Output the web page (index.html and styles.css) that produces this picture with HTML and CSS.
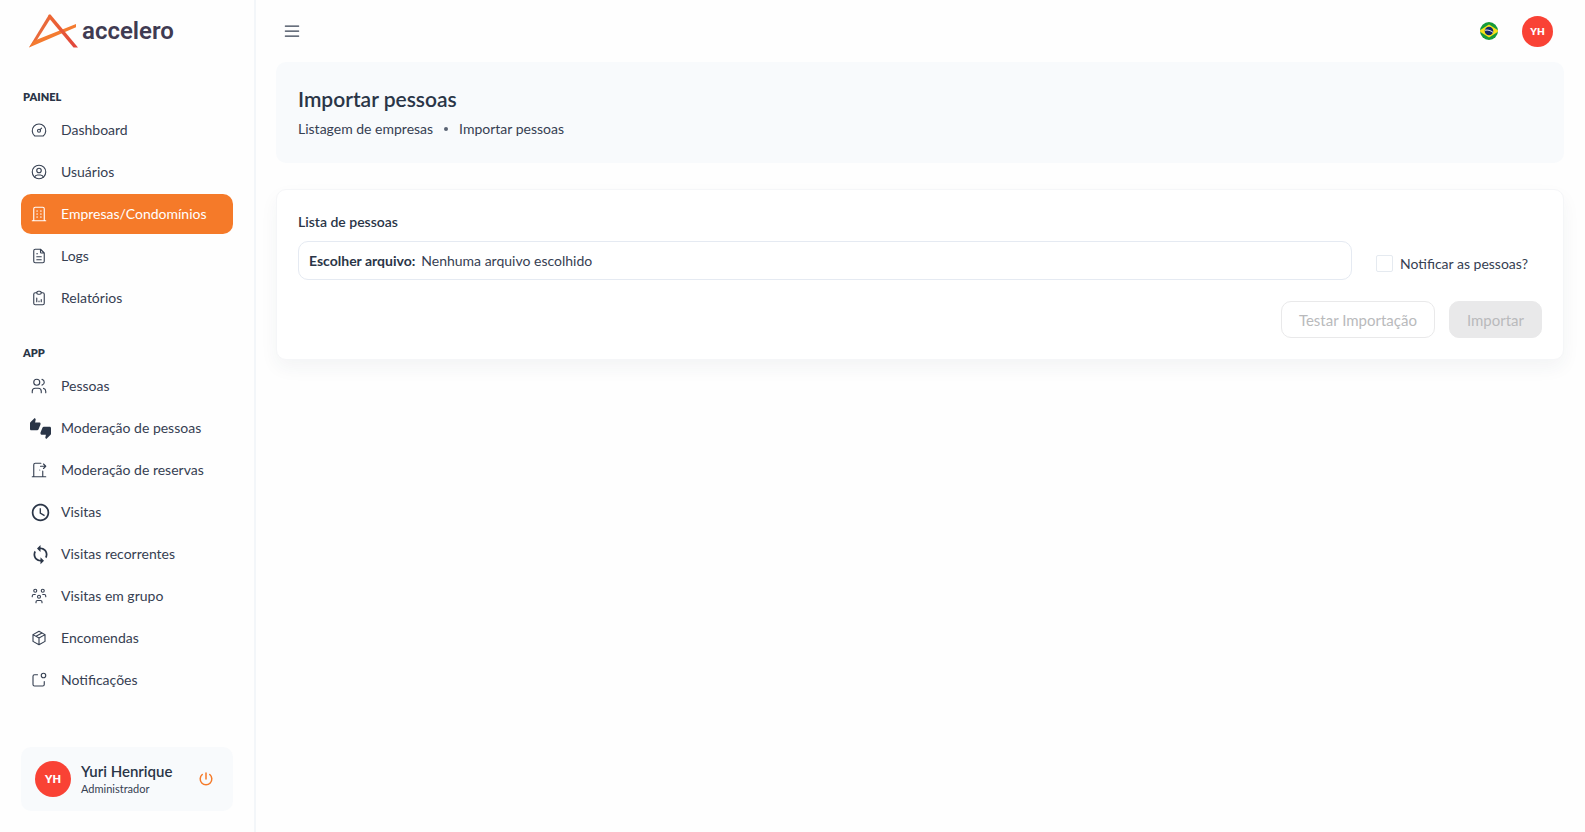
FILE: index.html
```html
<!DOCTYPE html>
<html lang="pt-BR">
<head>
    <meta charset="UTF-8">
    <meta name="viewport" content="width=device-width, initial-scale=1.0">
    <title>Importar pessoas</title>
    <link rel="stylesheet" href="styles.css">
</head>
<body>

    <div class="layout">
        <aside class="sidebar">
            <a class="logo" href="#">
                <svg class="logo-mark" viewBox="0 0 50 36">
                    <defs>
                        <linearGradient id="leg" x1="0" y1="0" x2="1" y2="1">
                            <stop offset="0" stop-color="#ee6a33"/>
                            <stop offset="1" stop-color="#e0433c"/>
                        </linearGradient>
                    </defs>
                    <path fill="#e9693a" d="M20 1.500L22.500 4 6 30 0 34.500z"/>
                    <path fill="#f47b30" d="M0 34.500L4.500 28 47 11v3.200z"/>
                    <path fill="url(#leg)" d="M20 1.500h1.500L49 34.500h-4.500L19 4z"/>
                </svg>
                <span class="logo-text">accelero</span>
            </a>

            <nav class="menu">
                <h2 class="menu-title">PAINEL</h2>
                <a class="menu-item" href="#">
                    <svg class="icon" viewBox="0 0 24 24"><circle cx="12" cy="13" r="2"/><path d="M13.450 11.550L15.500 9.500M6.400 20a9 9 0 1 1 11.200 0z"/></svg>
                    <span>Dashboard</span>
                </a>
                <a class="menu-item" href="#">
                    <svg class="icon" viewBox="0 0 24 24"><circle cx="12" cy="12" r="9"/><circle cx="12" cy="10" r="3"/><path d="M6.168 18.849A4 4 0 0 1 10 16h4a4 4 0 0 1 3.834 2.855"/></svg>
                    <span>Usuários</span>
                </a>
                <a class="menu-item active" href="#">
                    <svg class="icon" viewBox="0 0 24 24"><path d="M3 21h18M5 21V5a2 2 0 0 1 2-2h10a2 2 0 0 1 2 2v16M9 8h1M9 12h1M9 16h1M14 8h1M14 12h1M14 16h1"/></svg>
                    <span>Empresas/Condomínios</span>
                </a>
                <a class="menu-item" href="#">
                    <svg class="icon" viewBox="0 0 24 24"><path d="M14 3v4a1 1 0 0 0 1 1h4M17 21H7a2 2 0 0 1-2-2V5a2 2 0 0 1 2-2h7l5 5v11a2 2 0 0 1-2 2zM9 9h1M9 13h6M9 17h6"/></svg>
                    <span>Logs</span>
                </a>
                <a class="menu-item" href="#">
                    <svg class="icon" viewBox="0 0 24 24"><path d="M9 5H7a2 2 0 0 0-2 2v12a2 2 0 0 0 2 2h10a2 2 0 0 0 2-2V7a2 2 0 0 0-2-2h-2M9 17v-5M12 17v-1M15 17v-3"/><rect x="9" y="3" width="6" height="4" rx="2"/></svg>
                    <span>Relatórios</span>
                </a>

                <h2 class="menu-title">APP</h2>
                <a class="menu-item" href="#">
                    <svg class="icon" viewBox="0 0 24 24"><circle cx="9" cy="7" r="4"/><path d="M3 21v-2a4 4 0 0 1 4-4h4a4 4 0 0 1 4 4v2M16 3.130a4 4 0 0 1 0 7.750M21 21v-2a4 4 0 0 0-3-3.850"/></svg>
                    <span>Pessoas</span>
                </a>
                <a class="menu-item" href="#">
                    <svg class="icon icon-solid" viewBox="0 0 24 24"><path d="M12 6c0-.550-.450-1-1-1H5.820l.660-3.180.020-.230c0-.310-.130-.590-.330-.800L5.380 0 .440 4.940C.170 5.210 0 5.590 0 6v6.500c0 .830.670 1.500 1.500 1.500h6.750c.620 0 1.150-.380 1.380-.910l2.260-5.290c.070-.170.110-.360.110-.550V6zm10.500 4h-6.750c-.620 0-1.150.380-1.380.910l-2.260 5.290c-.070.170-.110.360-.110.550V18c0 .550.450 1 1 1h5.180l-.660 3.180-.020.240c0 .310.130.590.330.800l.790.780 4.940-4.940c.270-.270.440-.650.440-1.060v-6.500c0-.830-.670-1.500-1.500-1.500z"/></svg>
                    <span>Moderação de pessoas</span>
                </a>
                <a class="menu-item" href="#">
                    <svg class="icon" viewBox="0 0 24 24"><path d="M13 12v.010M3 21h18M5 21V5a2 2 0 0 1 2-2h7.500M17 13.500V21M14 7h7M18 4l3 3-3 3"/></svg>
                    <span>Moderação de reservas</span>
                </a>
                <a class="menu-item" href="#">
                    <svg class="icon icon-solid" viewBox="0 0 24 24"><path d="M11.990 2C6.470 2 2 6.480 2 12s4.470 10 9.990 10C17.520 22 22 17.520 22 12S17.520 2 11.990 2zM12 20c-4.420 0-8-3.580-8-8s3.580-8 8-8 8 3.580 8 8-3.580 8-8 8zm.500-13H11v6l5.250 3.150.750-1.230-4.500-2.670z"/></svg>
                    <span>Visitas</span>
                </a>
                <a class="menu-item" href="#">
                    <svg class="icon icon-solid" viewBox="0 0 24 24"><path d="M12 4V1L8 5l4 4V6c3.310 0 6 2.690 6 6 0 1.010-.250 1.970-.700 2.800l1.460 1.460C19.540 15.030 20 13.570 20 12c0-4.420-3.580-8-8-8zm0 14c-3.310 0-6-2.690-6-6 0-1.010.250-1.970.700-2.800L5.240 7.740C4.460 8.970 4 10.430 4 12c0 4.420 3.580 8 8 8v3l4-4-4-4v3z"/></svg>
                    <span>Visitas recorrentes</span>
                </a>
                <a class="menu-item" href="#">
                    <svg class="icon" viewBox="0 0 24 24"><circle cx="12" cy="13" r="2"/><circle cx="17" cy="5" r="2"/><circle cx="7" cy="5" r="2"/><path d="M8 21v-1a2 2 0 0 1 2-2h4a2 2 0 0 1 2 2v1M17 10h2a2 2 0 0 1 2 2v1M3 13v-1a2 2 0 0 1 2-2h2"/></svg>
                    <span>Visitas em grupo</span>
                </a>
                <a class="menu-item" href="#">
                    <svg class="icon" viewBox="0 0 24 24"><path d="M12 3l8 4.500v9L12 21l-8-4.500v-9zM12 12l8-4.500M12 12v9M12 12L4 7.500M16 5.250l-8 4.500"/></svg>
                    <span>Encomendas</span>
                </a>
                <a class="menu-item" href="#">
                    <svg class="icon" viewBox="0 0 24 24"><path d="M10 5H6a2 2 0 0 0-2 2v11a2 2 0 0 0 2 2h11a2 2 0 0 0 2-2v-4"/><circle cx="18" cy="6" r="3"/></svg>
                    <span>Notificações</span>
                </a>
            </nav>

            <div class="user-card">
                <span class="avatar">YH</span>
                <div class="user-info">
                    <strong class="user-name">Yuri Henrique</strong>
                    <span class="user-role">Administrador</span>
                </div>
                <button class="icon-button power" type="button" aria-label="Sair">
                    <svg class="icon" viewBox="0 0 24 24"><path d="M7 6a7.750 7.750 0 1 0 10 0M12 4v8"/></svg>
                </button>
            </div>
        </aside>

        <div class="page">
            <header class="topbar">
                <button class="icon-button" type="button" aria-label="Menu">
                    <svg class="icon icon-menu" viewBox="0 0 24 24"><path d="M4 6h16M4 12h16M4 18h16"/></svg>
                </button>
                <div class="topbar-right">
                    <button class="icon-button" type="button" aria-label="Idioma">
                        <svg class="flag" viewBox="0 0 18 18">
                            <clipPath id="round"><circle cx="9" cy="9" r="9"/></clipPath>
                            <g clip-path="url(#round)">
                                <path fill="#159a3a" d="M0 0h18v18H0z"/>
                                <path fill="#f7e01c" d="M9 2.500L19 9 9 15.500-1 9z"/>
                                <circle cx="9" cy="9" r="4.300" fill="#14296b"/>
                                <path d="M5 8.200c2.800-.500 5.600.200 8 2.200" fill="none" stroke="#fff" stroke-width=".9"/>
                            </g>
                        </svg>
                    </button>
                    <button class="avatar avatar-small" type="button">YH</button>
                </div>
            </header>

            <main class="content">
                <section class="page-header">
                    <h1 class="page-title">Importar pessoas</h1>
                    <nav class="breadcrumb">
                        <a href="#">Listagem de empresas</a>
                        <span class="dot"></span>
                        <span>Importar pessoas</span>
                    </nav>
                </section>

                <form class="card">
                    <label class="field-label" for="file">Lista de pessoas</label>
                    <div class="row">
                        <label class="file-field">
                            <input type="file" id="file" class="file-input">
                            <strong>Escolher arquivo:</strong>
                            <span>Nenhuma arquivo escolhido</span>
                        </label>
                        <label class="check">
                            <input type="checkbox" class="check-input">
                            <span>Notificar as pessoas?</span>
                        </label>
                    </div>
                    <div class="actions">
                        <button class="btn btn-outline" type="button" disabled>Testar Importação</button>
                        <button class="btn btn-solid" type="submit" disabled>Importar</button>
                    </div>
                </form>
            </main>
        </div>
    </div>

</body>
</html>
```
FILE: styles.css
```css
* {
    box-sizing: border-box;
}

body {
    margin: 0;
    font-family: Lato, "Liberation Sans", sans-serif;
    font-size: 14px;
    line-height: 20px;
    color: #364052;
    background-color: #fefefe;
}

a {
    color: inherit;
    text-decoration: none;
}

button, input {
    font-family: inherit;
}

.layout {
    display: flex;
    min-height: 100vh;
}

/* sidebar */
.sidebar {
    display: flex;
    flex-direction: column;
    width: 256px;
    flex-shrink: 0;
    padding: 0 21px;
    border-right: 2px solid #f3f6f9;
}

.logo {
    display: flex;
    align-items: center;
    height: 62px;
    padding-left: 8px;
    gap: 3px;
}

.logo-mark {
    width: 50px;
    height: 36px;
}

.logo-text {
    font-family: Roboto, sans-serif;
    font-size: 24px;
    font-weight: 600;
    line-height: 36px;
    color: #3f3b52;
}

.menu {
    flex: 1;
}

.menu-title {
    margin: 24px 2px 2px;
    font-size: 11px;
    font-weight: 800;
    line-height: 22px;
    color: #2a3547;
}

.menu-item {
    display: flex;
    align-items: center;
    height: 40px;
    margin-bottom: 2px;
    padding-left: 9px;
    border-radius: 10px;
}

.menu-item span {
    margin-left: auto;
    width: 172px;
}

.menu-item.active {
    color: #fff;
    background-color: #f57a29;
}

.icon {
    display: block;
    width: 18px;
    height: 18px;
    fill: none;
    stroke: currentColor;
    stroke-width: 1.5;
    stroke-linecap: round;
    stroke-linejoin: round;
}

.icon-solid {
    width: 21px;
    height: 21px;
    fill: #2a3547;
    stroke: none;
}

.icon-menu {
    width: 20px;
    height: 20px;
}

.icon-button {
    display: flex;
    align-items: center;
    justify-content: center;
    padding: 0;
    border: none;
    background: none;
    color: inherit;
    cursor: pointer;
}

.user-card {
    display: flex;
    align-items: center;
    height: 64px;
    margin-bottom: 21px;
    padding: 0 18px 0 14px;
    border-radius: 10px;
    background-color: #f8fafc;
}

.avatar {
    display: flex;
    align-items: center;
    justify-content: center;
    width: 36px;
    height: 36px;
    padding: 0;
    border: none;
    border-radius: 50%;
    color: #fff;
    background-color: #f94235;
    font-size: 11px;
    font-weight: 800;
}

.avatar-small {
    width: 31px;
    height: 31px;
    font-size: 10px;
    cursor: pointer;
}

.user-info {
    display: flex;
    flex: 1;
    flex-direction: column;
    padding-left: 10px;
}

.user-name {
    font-size: 15px;
    font-weight: 600;
    line-height: 20px;
    color: #2a3547;
}

.user-role {
    font-size: 11px;
    line-height: 16px;
}

.power {
    color: #f57a29;
}

.power .icon {
    stroke-width: 2;
}

/* page */
.page {
    flex: 1;
    padding: 0 21px 0 20px;
}

.topbar {
    display: flex;
    align-items: center;
    justify-content: space-between;
    height: 62px;
    padding: 0 11px 0 6px;
}

.topbar-right {
    display: flex;
    align-items: center;
    gap: 24px;
}

.flag {
    width: 18px;
    height: 18px;
}

.page-header {
    padding: 23px 22px 24px;
    border-radius: 10px;
    background-color: #f8fafc;
}

.page-title {
    margin: 0 0 6px;
    font-size: 21px;
    font-weight: 600;
    line-height: 28px;
    color: #2a3547;
}

.breadcrumb {
    display: flex;
    align-items: center;
    gap: 11px;
}

.dot {
    width: 4px;
    height: 4px;
    border-radius: 50%;
    background-color: #5a6373;
}

.card {
    margin-top: 26px;
    padding: 22px 21px 21px;
    border: 1px solid #f5f6f8;
    border-radius: 10px;
    background-color: #fff;
    box-shadow: 0 8px 18px rgba(40, 50, 70, 0.05);
}

.field-label {
    display: block;
    margin-bottom: 9px;
    font-weight: 600;
    color: #2a3547;
}

.row {
    display: flex;
    align-items: center;
    gap: 24px;
}

.file-field {
    display: flex;
    flex: 1;
    align-items: center;
    gap: 6px;
    height: 39px;
    padding: 0 10px;
    border: 1px solid #e5eaf2;
    border-radius: 10px;
    cursor: pointer;
}

.file-field strong {
    font-weight: 700;
    color: #2a3547;
}

.file-input {
    width: 1px;
    height: 1px;
    margin-right: -7px;
    opacity: 0;
}

.check {
    display: flex;
    align-items: center;
    gap: 7px;
    padding: 6px 14px 0 0;
}

.check-input {
    appearance: none;
    width: 17px;
    height: 17px;
    margin: 0;
    border: 1px solid #e5eaf0;
    border-radius: 2px;
    background-color: #fff;
}

.check-input:checked {
    background-color: #f57a29;
}

.actions {
    display: flex;
    justify-content: flex-end;
    gap: 14px;
    margin-top: 21px;
}

.btn {
    height: 37px;
    padding: 0 17px;
    border: 1px solid #e9e9ea;
    border-radius: 10px;
    font-size: 15px;
    color: #b9babc;
    background-color: #fff;
}

.btn-solid {
    background-color: #e9e9ea;
}
```
